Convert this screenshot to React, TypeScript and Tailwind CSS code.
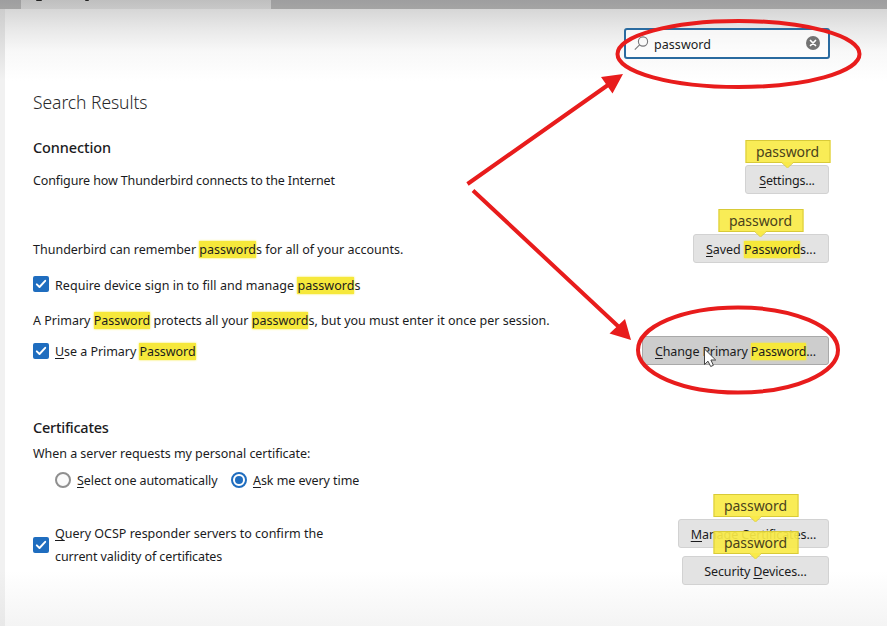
import type { ReactNode } from "react";

const Mark = ({ children }: { children: ReactNode }) => (
  <span className="bg-[#f6e83b] shadow-[0_0_2px_#f6e83b]">{children}</span>
);

const Key = ({ children }: { children: ReactNode }) => (
  <span className="underline decoration-1 underline-offset-2">{children}</span>
);

const Check = ({ className = "" }: { className?: string }) => (
  <span className={`flex size-4 shrink-0 items-center justify-center rounded-[2px] bg-[#1f6dbf] ${className}`}>
    <svg viewBox="0 0 16 16" className="size-4" fill="none" stroke="#fff" strokeWidth="1.9" strokeLinecap="round" strokeLinejoin="round">
      <path d="M3.8 8.300 6.5 11 12.200 4.800" />
    </svg>
  </span>
);

const Tip = ({ className = "" }: { className?: string }) => (
  <span className={`absolute -top-[26px] left-1/2 z-10 flex h-[23px] w-[85px] -translate-x-1/2 items-center justify-center border border-[#d8ca38] bg-[#f9ea48]/92 text-[14px] tracking-[-0.05px] text-[#4a421c] ${className}`}>
    <span>password</span>
    <svg viewBox="0 0 12 6" className="absolute top-[21px] left-1/2 h-1.5 w-3 -translate-x-1/2">
      <path d="M0 0h12L6 6z" fill="#f9ea48" />
      <path d="M0 .5 6 6l6-5.5" fill="none" stroke="#d8ca38" strokeWidth=".8" />
    </svg>
  </span>
);

const Button = ({ children, className = "", tone = "border-[#d2d2d2] bg-[#e3e3e3]", tip }: { children: ReactNode; className?: string; tone?: string; tip?: ReactNode }) => (
  <button className={`relative flex h-[29px] shrink-0 items-center justify-center rounded-[3px] border whitespace-pre ${tone} ${className}`}>
    <span className="pt-[3px]">{children}</span>
    {tip}
  </button>
);

export default function App() {
  return (
    <div className="relative flex h-[626px] w-[887px] flex-col overflow-hidden bg-white font-['Noto_Sans',sans-serif] text-[12.5px] leading-5 whitespace-nowrap text-[#1b1b1d]">
      <div className="flex h-[9px] shrink-0 bg-gradient-to-b from-[#9e9e9f] to-[#a4a4a4]">
        <div className="ml-[21px] flex h-full w-[250px] items-start gap-[43px] bg-gradient-to-b from-[#bfbfbf] to-[#c8c8c8] pl-[15px]">
          <span className="h-px w-1.5 rounded-b bg-[#222]" />
          <span className="h-px w-1 rounded-b bg-[#222]" />
        </div>
      </div>

      <div className="flex min-h-0 flex-1">
        <div className="w-[5px] shrink-0 bg-[linear-gradient(to_bottom,#cdcdcd_0,#f1f1f1_70px,#f1f1f1_562px,#e8e8e8_617px)]" />
        <main className="flex flex-1 flex-col bg-[linear-gradient(to_bottom,#d6d6d6_0,#e8e8e8_20px,#f8f8f8_42px,#ffffff_72px,#ffffff_562px,#f4f4f4_617px)] pr-[58px] pl-7">
          <div className="flex h-[50px] shrink-0 justify-end pt-[19px]">
            <div className="-mr-px flex h-[31px] w-[206px] items-center rounded-[3px] border-2 border-[#2a6ba0] bg-white/60 pr-2 pl-2">
              <svg viewBox="0 0 15 15" className="size-[15px]" fill="none" stroke="#77777a" strokeWidth="1.1">
                <circle cx="9" cy="5.5" r="4.6" />
                <path d="m5.6 8.8-4.8 4.8" />
              </svg>
              <span className="ml-[5px] flex-1 pt-[3px] text-[12.5px] tracking-[0.05px]">password</span>
              <svg viewBox="0 0 14 14" className="-mt-0.5 size-3.5">
                <circle cx="7" cy="7" r="7" fill="#737373" />
                <path d="m4.5 4.5 5 5m0-5-5 5" stroke="#fff" strokeWidth="1.7" strokeLinecap="round" />
              </svg>
            </div>
          </div>

          <h1 className="mt-7 flex h-[30px] items-center text-[17.5px] font-light tracking-[-0.07px] text-[#29292b]">Search Results</h1>
          <h2 className="mt-[15px] flex h-[30px] items-center text-[14.5px] font-medium tracking-[-0.1px]">Connection</h2>

          <div className="mt-[3px] flex h-[29px] items-center justify-between">
            <span className="pt-[3px] tracking-[-0.12px]">Configure how Thunderbird connects to the Internet</span>
            <Button className="w-[84px] tracking-[-0.2px]" tip={<Tip className="ml-[0.5px]" />}><Key>S</Key>ettings...</Button>
          </div>
          <div className="mt-10 flex h-[29px] items-center justify-between">
            <p className="pt-[3px]">Thunderbird can remember <Mark>password</Mark>s for all of your accounts.</p>
            <Button className="w-[136px] tracking-[-0.05px]" tip={<Tip className="-ml-[0.5px]" />}><Key>S</Key>aved <Mark>Password</Mark>s...</Button>
          </div>
          <label className="mt-[7px] flex h-[30px] items-center gap-1.5">
            <Check className="-mt-0.5" />
            <span className="pt-px tracking-[0.04px]">Require device sign in to fill and manage <Mark>password</Mark>s</span>
          </label>
          <p className="mt-[5px] h-[30px] pt-px leading-[30px]">
            A Primary <Mark>Password</Mark> protects all your <Mark>password</Mark>s, but you must enter it once per session.
          </p>
          <div className="mt-px flex h-[29px] items-center justify-between">
            <label className="flex items-center gap-1.5">
              <Check className="mt-px" />
              <span className="pt-[3px] tracking-[-0.05px]"><Key>U</Key>se a Primary <Mark>Password</Mark></span>
            </label>
            <Button tone="border-[#a9a9a9] bg-[#cdcdcd]" className="w-[187px] tracking-[-0.13px]"><Key>C</Key>hange Primary <Mark>Password</Mark>...</Button>
          </div>

          <h2 className="mt-[47px] flex h-[30px] items-center text-[14.5px] font-medium tracking-[-0.25px]">Certificates</h2>
          <p className="mt-0.5 tracking-[-0.04px]">When a server requests my personal certificate:</p>
          <div className="mt-1.5 ml-[22px] flex h-5 items-center">
            <span className="size-4 rounded-full border-2 border-[#8f8f8f] bg-[#fafafa]" />
            <span className="ml-1.5 pt-px tracking-[-0.09px]"><Key>S</Key>elect one automatically</span>
            <span className="ml-[13.5px] flex size-4 items-center justify-center rounded-full border-2 border-[#1f6dbf]">
              <span className="size-2 rounded-full bg-[#1f6dbf]" />
            </span>
            <span className="ml-1.5 pt-px tracking-[-0.06px]"><Key>A</Key>sk me every time</span>
          </div>

          <div className="mt-[29px] flex h-[66px] justify-between">
            <label className="flex h-[52px] items-center gap-1.5 leading-[23px]">
              <Check />
              <span><Key>Q</Key>uery OCSP responder servers to confirm the<br /><span className="tracking-[-0.1px]">current validity of certificates</span></span>
            </label>
            <div className="flex flex-col items-end gap-2">
              <Button className="w-[151px] tracking-[-0.07px]" tip={<Tip className="ml-0.5" />}><Key>M</Key>anage Certificates...</Button>
              <Button className="w-[147px] tracking-[-0.12px]" tip={<Tip />}>Security <Key>D</Key>evices...</Button>
            </div>
          </div>
        </main>
      </div>

      <svg viewBox="0 0 887 626" className="pointer-events-none absolute inset-0 z-20 size-full" fill="none">
        <g stroke="#e81c1c" strokeWidth="4">
          <ellipse cx="738.5" cy="54" rx="121" ry="33" />
          <ellipse cx="738" cy="350" rx="100" ry="42.5" />
          <path d="M467.5 184 608 85M473 190.500 620 328" />
        </g>
        <path d="m601 77 22-3-10.500 19.500zM631 340l-21.500-6.500 15.500-14.500z" fill="#e81c1c" />
        <path d="M704.500 349v15.500l3.500-3.300 2.700 5.300 2.700-1.200-2.500-5.300h4.800z" fill="#fff" stroke="#444" strokeWidth="1" />
      </svg>
    </div>
  );
}
